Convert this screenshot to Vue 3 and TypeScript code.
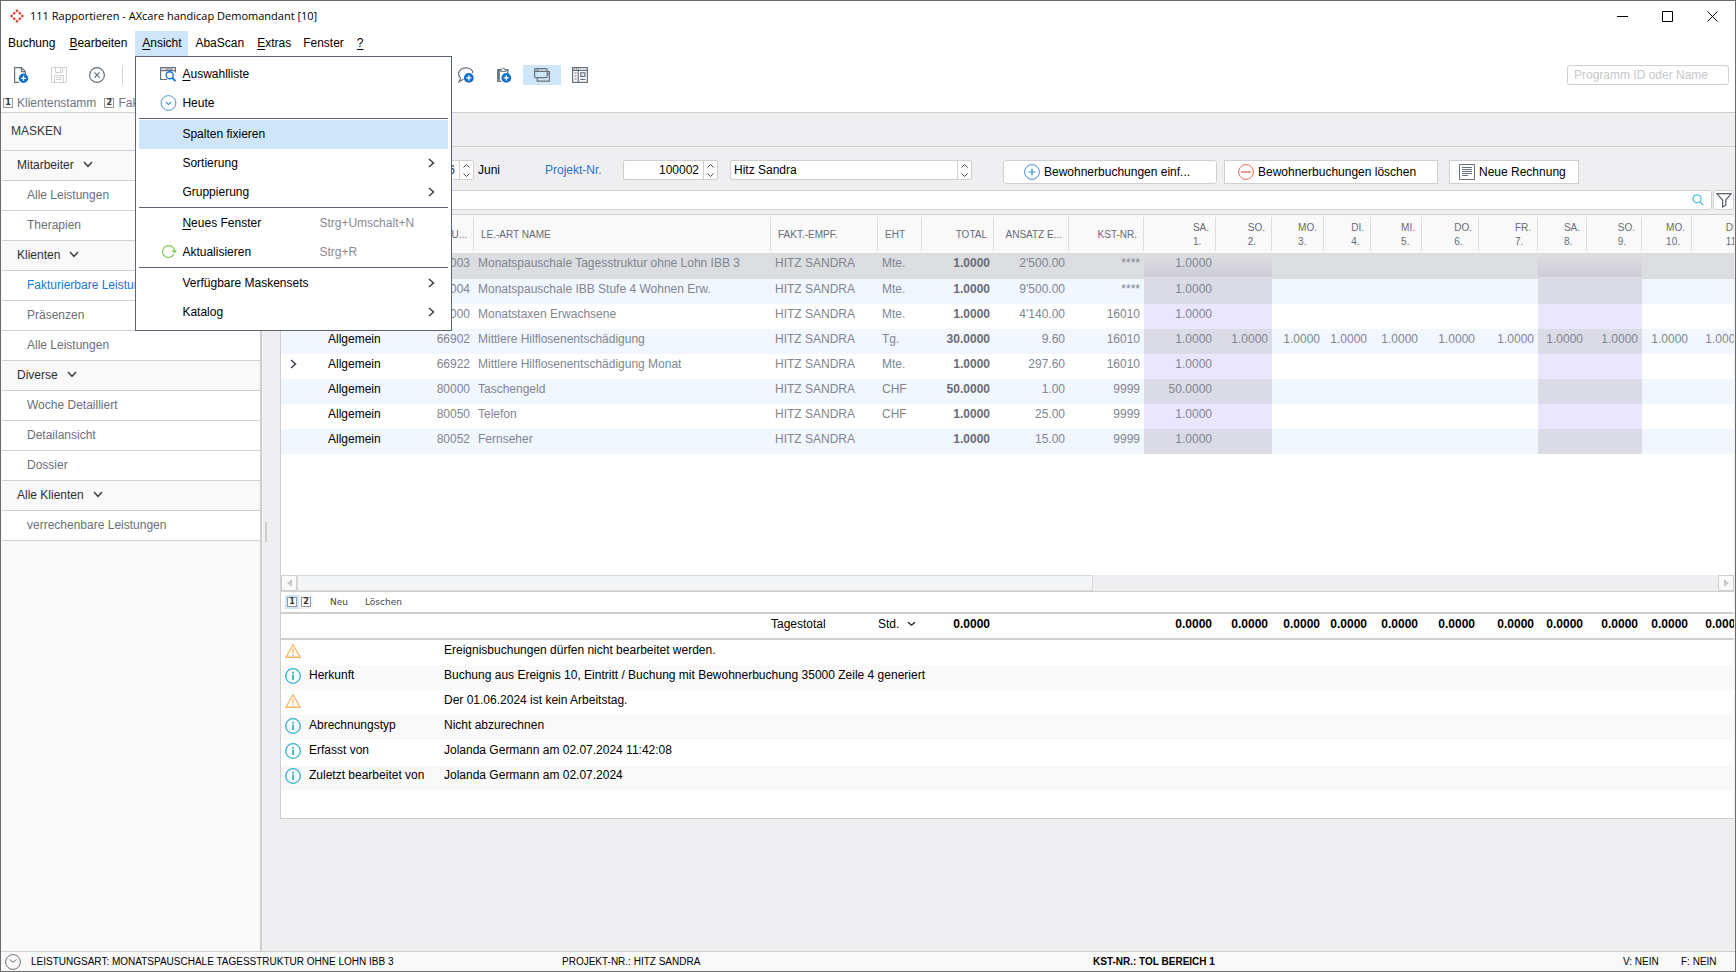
<script setup lang="ts">
import { ref } from 'vue'

interface MaskGroup { title: string; items: string[] }
interface Booking {
  nr: string; name: string; unit: string; total: string; rate: string; kst: string
  days: string[]; expand?: boolean
}
interface Message { kind: 'warn' | 'info'; label: string; text: string }

const groups: MaskGroup[] = [
  { title: 'Mitarbeiter', items: ['Alle Leistungen', 'Therapien'] },
  { title: 'Klienten', items: ['Fakturierbare Leistungen', 'Präsenzen', 'Alle Leistungen'] },
  { title: 'Diverse', items: ['Woche Detailliert', 'Detailansicht', 'Dossier'] },
  { title: 'Alle Klienten', items: ['verrechenbare Leistungen'] },
]
const activeMask = 'Fakturierbare Leistungen'

const weekdays = ['SA.', 'SO.', 'MO.', 'DI.', 'MI.', 'DO.', 'FR.', 'SA.', 'SO.', 'MO.', 'DI.']
const isWeekend = (i: number) => weekdays[i] === 'SA.' || weekdays[i] === 'SO.'
const first = (v: string) => weekdays.map((_, i) => (i === 0 ? v : ''))

const bookings: Booking[] = [
  { nr: '35003', name: 'Monatspauschale Tagesstruktur ohne Lohn IBB 3', unit: 'Mte.', total: '1.0000', rate: "2'500.00", kst: '****', days: first('1.0000') },
  { nr: '35004', name: 'Monatspauschale IBB Stufe 4 Wohnen Erw.', unit: 'Mte.', total: '1.0000', rate: "9'500.00", kst: '****', days: first('1.0000') },
  { nr: '60000', name: 'Monatstaxen Erwachsene', unit: 'Mte.', total: '1.0000', rate: "4'140.00", kst: '16010', days: first('1.0000') },
  { nr: '66902', name: 'Mittlere Hilflosenentschädigung', unit: 'Tg.', total: '30.0000', rate: '9.60', kst: '16010', days: weekdays.map(() => '1.0000') },
  { nr: '66922', name: 'Mittlere Hilflosenentschädigung Monat', unit: 'Mte.', total: '1.0000', rate: '297.60', kst: '16010', days: first('1.0000'), expand: true },
  { nr: '80000', name: 'Taschengeld', unit: 'CHF', total: '50.0000', rate: '1.00', kst: '9999', days: first('50.0000') },
  { nr: '80050', name: 'Telefon', unit: 'CHF', total: '1.0000', rate: '25.00', kst: '9999', days: first('1.0000') },
  { nr: '80052', name: 'Fernseher', unit: '', total: '1.0000', rate: '15.00', kst: '9999', days: first('1.0000') },
]

const columnWidths = [36, 105, 52, 297, 107, 44, 72, 75, 75, 72, 56, 52, 47, 51, 57, 59, 49, 55, 50, 54]

const messages: Message[] = [
  { kind: 'warn', label: '', text: 'Ereignisbuchungen dürfen nicht bearbeitet werden.' },
  { kind: 'info', label: 'Herkunft', text: 'Buchung aus Ereignis 10, Eintritt / Buchung mit Bewohnerbuchung 35000 Zeile 4 generiert' },
  { kind: 'warn', label: '', text: 'Der 01.06.2024 ist kein Arbeitstag.' },
  { kind: 'info', label: 'Abrechnungstyp', text: 'Nicht abzurechnen' },
  { kind: 'info', label: 'Erfasst von', text: 'Jolanda Germann am 02.07.2024 11:42:08' },
  { kind: 'info', label: 'Zuletzt bearbeitet von', text: 'Jolanda Germann am 02.07.2024' },
]

const month = ref('6')
const project = ref('100002')
const client = ref('Hitz Sandra')
</script>

<template>
  <div class="window">
    <header class="titlebar">
      <svg class="logo" width="14" height="14" viewBox="0 0 14 14" fill="#e8453c">
        <path d="M7 0l1.7 1.7L7 3.4 5.3 1.7zM4.2 2.6l1.7 1.7-1.7 1.7-1.7-1.7zM9.8 2.6l1.7 1.7-1.7 1.7-1.7-1.7zM1.7 5.3L3.4 7 1.7 8.7 0 7zM12.3 5.3L14 7l-1.7 1.7L10.6 7zM4.2 8l1.7 1.7-1.7 1.7-1.7-1.7zM9.8 8l1.7 1.7-1.7 1.7L8.1 9.7zM7 10.6l1.7 1.7L7 14l-1.7-1.7z" />
      </svg>
      <h1>111 Rapportieren - AXcare handicap Demomandant [10]</h1>
      <div class="winbtns">
        <button type="button" aria-label="Minimieren"><svg width="11" height="11"><path d="M0 5.5h11" stroke="#000" /></svg></button>
        <button type="button" aria-label="Maximieren"><svg width="11" height="11"><path d="M.5.5h10v10H.5z" fill="none" stroke="#000" /></svg></button>
        <button type="button" aria-label="Schliessen"><svg width="11" height="11"><path d="M.5.5l10 10M10.5.5l-10 10" stroke="#000" /></svg></button>
      </div>
    </header>

    <nav class="menubar">
      <button type="button">Buchung</button>
      <button type="button"><u>B</u>earbeiten</button>
      <div class="open-menu">
        <button type="button" class="open"><u>A</u>nsicht</button>
        <div class="popup" role="menu">
          <button type="button" role="menuitem">
            <svg width="17" height="16" viewBox="0 0 17 16" fill="none">
              <path d="M7 13.5H.6V1.6h14.8v5M.6 4.6h14.8" stroke="#68727d" stroke-width="1.2" />
              <path d="M2.5 3.1h1M5 3.1h8" stroke="#68727d" />
              <circle cx="9.7" cy="9.2" r="3.5" stroke="#1677d2" stroke-width="1.4" />
              <path d="M12.2 11.8l3.3 3.3" stroke="#1677d2" stroke-width="2" />
            </svg>
            <span><u>A</u>uswahlliste</span>
          </button>
          <button type="button" role="menuitem">
            <svg width="16" height="16" viewBox="0 0 16 16" fill="none" stroke="#4a93d8">
              <circle cx="8" cy="8" r="7.4" /><path d="M5.5 7.2L8 9.4l2.5-2.2" stroke-width="1.2" />
            </svg>
            <span>Heute</span>
          </button>
          <hr />
          <button type="button" role="menuitem" class="hover"><i></i><span>Spalten fixieren</span></button>
          <button type="button" role="menuitem"><i></i><span>Sortierung</span><svg class="sub" width="7" height="10" viewBox="0 0 7 10"><path d="M1 1l4.5 4L1 9" /></svg></button>
          <button type="button" role="menuitem"><i></i><span>Gruppierung</span><svg class="sub" width="7" height="10" viewBox="0 0 7 10"><path d="M1 1l4.5 4L1 9" /></svg></button>
          <hr />
          <button type="button" role="menuitem"><i></i><span><u>N</u>eues Fenster</span><kbd>Strg+Umschalt+N</kbd></button>
          <button type="button" role="menuitem">
            <svg width="16" height="16" viewBox="0 0 16 16" fill="none" stroke="#7ecb4f" stroke-width="1.2">
              <path d="M13.3 10.4A6 6 0 1 1 14 8M11.8 6.4L14 8.6l1.8-2.2" />
            </svg>
            <span>Aktualisieren</span><kbd>Strg+R</kbd>
          </button>
          <hr />
          <button type="button" role="menuitem"><i></i><span>Verfügbare Maskensets</span><svg class="sub" width="7" height="10" viewBox="0 0 7 10"><path d="M1 1l4.5 4L1 9" /></svg></button>
          <button type="button" role="menuitem"><i></i><span>Katalog</span><svg class="sub" width="7" height="10" viewBox="0 0 7 10"><path d="M1 1l4.5 4L1 9" /></svg></button>
        </div>
      </div>
      <button type="button">AbaScan</button>
      <button type="button" class="tight"><u>E</u>xtras</button>
      <button type="button" class="tight">Fenster</button>
      <button type="button"><u>?</u></button>
    </nav>

    <div class="toolbar">
      <button type="button" class="tool" aria-label="Neu">
        <svg width="16" height="16" viewBox="0 0 16 16" fill="none">
          <path d="M6 15.4H1.6V.6h6.8l4 4V7M8.4.6v4h4" stroke="#68727d" stroke-width="1.2" />
          <circle cx="10.5" cy="11.3" r="4.7" fill="#1270cc" /><path d="M8 11.3h5M10.5 8.8v5" stroke="#fff" stroke-width="1.2" />
        </svg>
      </button>
      <button type="button" class="tool" aria-label="Speichern" disabled>
        <svg width="16" height="16" viewBox="0 0 16 16" fill="none" stroke="#d0d2d5">
          <path d="M.5.5h15v15H.5zM4.5.5v5h7v-5M9.5 1.5v2.5M3.5 15.5v-7h9v7M5 10.5h6M5 12.5h6" />
        </svg>
      </button>
      <button type="button" class="tool" aria-label="Abbrechen">
        <svg width="16" height="16" viewBox="0 0 16 16" fill="none" stroke="#5d6873" stroke-width="1.1">
          <circle cx="8" cy="8" r="7.4" /><path d="M5.4 5.4l5.2 5.2M10.6 5.4l-5.2 5.2" />
        </svg>
      </button>
      <span class="divider"></span>
      <span class="covered"></span>
      <button type="button" class="tool" aria-label="Kommentar hinzufügen">
        <svg width="16" height="16" viewBox="0 0 16 16" fill="none">
          <path d="M5.5 12.2L1 14.8l1.6-3.6C-1.8 6.8 1.8.8 8 .8c4 0 6.8 2.3 7 5.4" stroke="#68727d" stroke-width="1.2" />
          <circle cx="10.8" cy="10.9" r="4.9" fill="#1270cc" /><path d="M8.2 10.9h5.2M10.8 8.3v5.2" stroke="#fff" stroke-width="1.3" />
        </svg>
      </button>
      <button type="button" class="tool" aria-label="Aus Zwischenablage">
        <svg width="16" height="16" viewBox="0 0 16 16" fill="none">
          <path d="M5 14.3H1.8V2.7h10v3.5M3.2 2.7v10" stroke="#68727d" stroke-width="1.4" />
          <path d="M4.6 4.4V2.8h1.1a1.6 1.6 0 0 1 3.2 0H10v1.6z" stroke="#68727d" fill="#fff" />
          <circle cx="10.3" cy="10.9" r="4.9" fill="#1270cc" /><path d="M7.7 10.9h5.2M10.3 8.3v5.2" stroke="#fff" stroke-width="1.3" />
        </svg>
      </button>
      <button type="button" class="tool on" aria-label="Fenster gruppieren">
        <svg width="16" height="16" viewBox="0 0 16 16" fill="none" stroke="#68727d" stroke-width="1.2">
          <rect x=".6" y="1.6" width="12.6" height="9" rx="1" /><path d="M.6 4.4h12.6M2.5 3h2M13.2 4.6h2.2v9.6H3.2v-3.6M13.2 6.9h2.2" />
        </svg>
      </button>
      <button type="button" class="tool" aria-label="Maskenansicht">
        <svg width="16" height="16" viewBox="0 0 16 16" fill="none" stroke="#68727d" stroke-width="1.2">
          <path d="M.6.6h14.8v14.8H.6zM.6 3.4h14.8M6.2 3.4v12M8.8 5.8h4.2v3.6H8.8zM8.4 12.4h5M2.4 6h2.2M2.4 9h2.2M2.4 12h2.2M2 2h1M4 2h1M6 2h1" />
        </svg>
      </button>
      <input class="prog" type="text" placeholder="Programm ID oder Name" aria-label="Programm ID oder Name" />
    </div>

    <div class="crumbs">
      <a href="#"><b>1</b>Klientenstamm</a>
      <a href="#"><b>2</b>Fakturierung</a>
    </div>

    <div class="work">
      <aside class="sidebar">
        <h2>MASKEN</h2>
        <template v-for="g in groups" :key="g.title">
          <button type="button" class="group">
            {{ g.title }}
            <svg width="10" height="7" viewBox="0 0 10 7" fill="none" stroke="#3c4048" stroke-width="1.5"><path d="M1 1l4 4.3L9 1" /></svg>
          </button>
          <a v-for="item in g.items" :key="item" href="#" :class="{ active: item === activeMask }">{{ item }}</a>
        </template>
      </aside>
      <div class="splitter"><span></span></div>

      <main class="content">
        <div class="tabs"></div>
        <div class="form">
          <div class="field month">
            <input v-model="month" type="text" aria-label="Monat" />
            <span class="spin"><button type="button" aria-label="Monat vor"><svg width="7" height="4"><path d="M.5 3.5l3-3 3 3" /></svg></button><button type="button" aria-label="Monat zurück"><svg width="7" height="4"><path d="M.5.5l3 3 3-3" /></svg></button></span>
          </div>
          <span class="monthname">Juni</span>
          <label class="lbl" for="project">Projekt-Nr.</label>
          <div class="field nr">
            <input id="project" v-model="project" type="text" />
            <span class="spin"><button type="button" aria-label="Projekt vor"><svg width="7" height="4"><path d="M.5 3.5l3-3 3 3" /></svg></button><button type="button" aria-label="Projekt zurück"><svg width="7" height="4"><path d="M.5.5l3 3 3-3" /></svg></button></span>
          </div>
          <div class="field client">
            <input v-model="client" type="text" aria-label="Projektname" />
            <span class="spin"><button type="button" aria-label="Name vor"><svg width="7" height="4"><path d="M.5 3.5l3-3 3 3" /></svg></button><button type="button" aria-label="Name zurück"><svg width="7" height="4"><path d="M.5.5l3 3 3-3" /></svg></button></span>
          </div>
          <div class="actions">
            <button type="button" class="round">
              <svg width="16" height="16" viewBox="0 0 16 16" fill="none" stroke="#3d8fdb"><circle cx="8" cy="8" r="7.4" /><path d="M4.6 8h6.8M8 4.6v6.8" stroke-width="1.2" /></svg>
              Bewohnerbuchungen einf...
            </button>
            <button type="button">
              <svg width="16" height="16" viewBox="0 0 16 16" fill="none" stroke="#f0625c"><circle cx="8" cy="8" r="7.4" /><path d="M3 8h10" stroke-width="1.3" /></svg>
              Bewohnerbuchungen löschen
            </button>
            <button type="button" class="slim">
              <svg width="16" height="16" viewBox="0 0 16 16" fill="none" stroke="#68727d"><path d="M.5.5h15v15H.5zM3 3.5h10M3 5.5h10M3 7.5h10M3 9.5h10M3 11.5h6" /></svg>
              Neue Rechnung
            </button>
          </div>
        </div>

        <div class="filter">
          <div class="search">
            <input type="search" aria-label="Tabelle durchsuchen" />
            <svg width="12" height="12" viewBox="0 0 12 12" fill="none" stroke="#4cc3d9" stroke-width="1.3"><circle cx="5" cy="4.8" r="4" /><path d="M7.8 7.8l3.4 3.5" /></svg>
          </div>
          <button type="button" class="funnel" aria-label="Filter">
            <svg width="16" height="16" viewBox="0 0 16 16" fill="none" stroke="#55606b" stroke-width="1.2"><path d="M.8 1.6h14.4L9.8 8v5l-3.2 2V8z" /></svg>
          </button>
        </div>

        <section class="panel">
          <div class="grid">
            <table>
              <colgroup><col v-for="(w, i) in columnWidths" :key="i" :width="w" /></colgroup>
              <thead>
                <tr>
                  <th class="bare"></th><th class="bare"></th>
                  <th class="num">NU...</th>
                  <th>LE.-ART NAME</th><th>FAKT.-EMPF.</th><th>EHT</th>
                  <th class="num">TOTAL</th><th class="num">ANSATZ E...</th><th class="num">KST-NR.</th>
                  <th v-for="(d, i) in weekdays" :key="i" class="num"><span>{{ d }}<br />{{ i + 1 }}.</span></th>
                </tr>
              </thead>
              <tbody>
                <tr v-for="(b, r) in bookings" :key="b.nr" :class="{ selected: r === 0 }">
                  <td class="mark"><svg v-if="b.expand" width="7" height="10" viewBox="0 0 7 10"><path d="M1 1l4.5 4L1 9" /></svg></td>
                  <td class="area">Allgemein</td>
                  <td class="num">{{ b.nr }}</td>
                  <td>{{ b.name }}</td>
                  <td>HITZ SANDRA</td>
                  <td>{{ b.unit }}</td>
                  <td class="num total">{{ b.total }}</td>
                  <td class="num">{{ b.rate }}</td>
                  <td class="num">{{ b.kst }}</td>
                  <td v-for="(v, i) in b.days" :key="i" class="num" :class="{ weekend: isWeekend(i) }">{{ v }}</td>
                </tr>
              </tbody>
            </table>
          </div>
          <div class="hscroll">
            <button type="button" aria-label="Nach links"><svg width="5" height="8"><path d="M5 0v8L0 4z" fill="#c6c7ca" /></svg></button>
            <div class="track"><div class="thumb"></div></div>
            <button type="button" aria-label="Nach rechts"><svg width="5" height="8"><path d="M0 0v8l5-4z" fill="#c6c7ca" /></svg></button>
          </div>
          <div class="rowtools">
            <button type="button" class="key on"><b>1</b></button>
            <button type="button" class="key"><b>2</b></button>
            <button type="button" class="first">Neu</button>
            <button type="button">Löschen</button>
          </div>
          <div class="totals">
            <table>
              <colgroup><col v-for="(w, i) in columnWidths" :key="i" :width="w" /></colgroup>
              <tbody>
                <tr>
                  <td colspan="4"></td>
                  <td class="flush">Tagestotal</td>
                  <td class="flush">
                    <div class="unit">
                      <select aria-label="Einheit"><option>Std.</option></select>
                      <svg width="9" height="6" viewBox="0 0 9 6" fill="none" stroke="#222" stroke-width="1.4"><path d="M1 1.2l3.5 3L8 1.2" /></svg>
                    </div>
                  </td>
                  <td class="num">0.0000</td><td></td><td></td>
                  <td v-for="(d, i) in weekdays" :key="i" class="num">0.0000</td>
                </tr>
              </tbody>
            </table>
          </div>
          <dl class="messages">
            <div v-for="m in messages" :key="m.text">
              <svg v-if="m.kind === 'warn'" width="16" height="16" viewBox="0 0 16 16" fill="none" stroke="#f9b565" stroke-width="1.2">
                <path d="M8 1.6l7.2 12.8H.8zM1 14.2h14" /><path d="M8 5.6v5M8 11.4v1.6" stroke-width="1.8" stroke="#fbcb92" />
              </svg>
              <svg v-else width="16" height="16" viewBox="0 0 16 16" fill="none" stroke="#2fb3cb" stroke-width="1.3">
                <circle cx="8" cy="8" r="7.3" /><path d="M8 6.4v5.6M8 3.8v1.6" stroke-width="1.8" />
              </svg>
              <dt>{{ m.label }}</dt>
              <dd>{{ m.text }}</dd>
            </div>
          </dl>
        </section>
      </main>
    </div>

    <footer class="status">
      <svg width="16" height="16" viewBox="0 0 16 16" fill="none" stroke="#68727d"><circle cx="8" cy="8" r="7.4" /><path d="M4.6 5.6L8 8.2l3.4-2.6" /></svg>
      <span>LEISTUNGSART: MONATSPAUSCHALE TAGESSTRUKTUR OHNE LOHN IBB 3</span>
      <span>PROJEKT-NR.: HITZ SANDRA</span>
      <strong>KST-NR.: TOL BEREICH 1</strong>
      <span>V: NEIN</span>
      <span>F: NEIN</span>
    </footer>
  </div>
</template>

<style>
html, body { margin: 0; background: #fff; }
</style>

<style scoped>
* { box-sizing: border-box; }
.window {
  display: flex; flex-direction: column; min-height: 100vh; overflow: hidden;
  border: 1px solid #6b6b6b; background: #fff; color: #000;
  font: 12px/16px "Liberation Sans", Arial, sans-serif;
}
button, input, select { font: inherit; color: inherit; margin: 0; padding: 0; border: 0; background: none; border-radius: 0; outline: 0; }
button { display: flex; align-items: center; white-space: nowrap; }
svg { flex: none; display: block; }
u { text-underline-offset: 2px; }

.titlebar { display: flex; align-items: center; height: 30px; padding-left: 9px; }
h1 { flex: 1; margin: 0 0 0 6px; font: 11px/16px "Open Sans", "Noto Sans", sans-serif; }
.winbtns { display: flex; }
.winbtns button { width: 45px; height: 28px; justify-content: center; }

.menubar { display: flex; height: 25px; }
.menubar > button { padding: 0 7px 2px; }
.menubar > .tight { padding: 0 6px 2px; }
.open-menu { position: relative; display: flex; margin-left: 1px; }
.open { background: #cfe6fa; width: 53px; padding-bottom: 2px; justify-content: center; }
.popup {
  position: absolute; z-index: 5; top: 25px; left: 0; width: 317px; padding: 3px;
  border: 1px solid #5b6472; background: #fff;
}
.popup button { width: 100%; height: 29px; padding: 0 13px 1px 21px; }
.popup button > svg:first-child, .popup i { width: 17px; margin-right: 5px; }
.popup .hover { background: #cfe6fa; }
.popup hr { height: 1px; margin: 0 0 1px; border: 0; background: #5b6472; }
.popup kbd { margin-left: auto; width: 116px; text-align: left; font: inherit; color: #858a94; }
.popup .sub { margin-left: auto; }
.sub, .mark svg { fill: none; stroke: #3c4048; stroke-width: 1.5; }

.toolbar { display: flex; align-items: center; height: 37px; padding: 0 6px 0 1px; }
.tool { width: 38px; height: 20px; justify-content: center; }
.tool.on { background: #cfe6fa; }
.divider { width: 1px; height: 20px; margin-left: 6px; background: #d3d4d7; }
.covered { width: 324px; }
.prog { width: 162px; height: 20px; margin-left: auto; padding: 0 6px; border: 1px solid #cfd0d2; border-radius: 3px; }
.prog::placeholder { color: #c6c8cc; opacity: 1; }

.crumbs { display: flex; gap: 8px; height: 19px; padding-left: 2px; color: #6f7480; }
.crumbs a { display: flex; align-items: center; color: inherit; text-decoration: none; }
.crumbs b { margin-right: 4px; }
b {
  display: block; width: 10px; height: 10px; border: 1px solid #999; background: #fff;
  font: bold 8px/8px "DejaVu Sans", sans-serif; color: #333; text-align: center;
}

.work { flex: 1; display: flex; border-top: 1px solid #cfcfd0; background: #efeff1; }
.sidebar { flex: none; width: 261px; padding-left: 1px; border-right: 2px solid #cfcfd0; background: #f9f9f9; }
h2 { height: 38px; margin: 0; padding: 0 9px; border-bottom: 1px solid #cfcfd0; font: 12px/37px "Liberation Sans", Arial, sans-serif; color: #33363d; }
.group, .sidebar a { display: flex; align-items: center; width: 100%; height: 30px; padding-bottom: 2px; border-bottom: 1px solid #cfcfd0; }
.group { gap: 9px; padding-left: 15px; color: #2c2e34; }
.sidebar a { padding-left: 25px; background: #fff; color: #6b6f7a; text-decoration: none; }
.sidebar a.active { color: #1677d2; }
.splitter { flex: none; display: flex; align-items: center; width: 18px; padding-left: 3px; }
.splitter span { width: 2px; height: 20px; background: #cfcfd0; }

.content { flex: 1; min-width: 0; }
.tabs { height: 34px; border-bottom: 1px solid #cfcfd0; }
.form { display: flex; align-items: flex-start; height: 43px; padding-top: 13px; }
.form > * { flex: none; }
.field { display: flex; height: 20px; border: 1px solid #cfcfd0; border-radius: 2px; background: #fff; }
.field input { flex: 1; min-width: 0; padding: 0 4px; text-align: right; }
.field.month { width: 63px; margin-left: 131px; }
.field.month input { color: #1c2f7a; }
.field.nr { width: 95px; }
.field.client { width: 242px; margin-left: 12px; }
.field.client input { padding: 0 3px; text-align: left; }
.spin { display: flex; flex-direction: column; width: 14px; border-left: 1px solid #cfcfd0; }
.spin button { flex: 1; justify-content: center; }
.spin path { fill: none; stroke: #444; }
.monthname, .lbl { line-height: 20px; }
.monthname { width: 71px; padding-left: 4px; }
.lbl { width: 78px; color: #2a72c8; }
.actions { display: flex; margin-left: 31px; }
.actions button { gap: 4px; width: 214px; height: 24px; margin-right: 7px; padding-left: 13px; border: 1px solid #cfcfd0; background: #fff; }
.actions .round { padding-left: 20px; border-radius: 3px; }
.actions .slim { width: 130px; margin-left: 4px; padding-left: 9px; }

.filter { display: flex; gap: 1px; height: 20px; margin-bottom: 4px; padding-right: 1px; }
.search { flex: 1; display: flex; align-items: center; padding-right: 7px; border: 1px solid #cfcfd0; border-radius: 3px; background: #fff; }
.search input { flex: 1; height: 18px; appearance: none; }
.funnel { width: 21px; justify-content: center; border: 1px solid #cfcfd0; border-radius: 3px; background: #fff; }

.panel { margin-right: 1px; border: 1px solid #cfcfd0; border-right: 0; background: #fff; }
.grid { min-height: 360px; overflow: hidden; }
table { width: 1465px; min-width: 100%; table-layout: fixed; border-collapse: separate; border-spacing: 0; }
th { height: 38px; padding: 2px 7px 0; background: linear-gradient(#dcdde0, #dcdde0) right 2px / 1px 34px no-repeat #f9f9f9; font: 10px/14px "Liberation Sans", Arial, sans-serif; color: #666b75; text-align: left; white-space: nowrap; }
th.bare { background: #f9f9f9; }
th.num span { display: inline-block; text-align: left; }
td { height: 25px; padding: 2px 4px 0; color: #808590; white-space: nowrap; vertical-align: top; }
.num { text-align: right; }
th.num { text-align: right; }
.area { padding-left: 11px; color: #000; }
.mark { padding: 5px 0 0 9px; }
td.total { font-weight: bold; color: #696c72; }
tbody tr:nth-child(even) td { background: #f2f6ff; }
td.weekend { background: #eae6ff; }
tbody tr:nth-child(even) td.weekend { background: #dbdae7; }
.selected td { height: 26px; background: #dcdde0; }
.selected td.weekend { background: linear-gradient(#dcdde0 10%, #cdccd8 90%, #dcdde0 92%); }

.hscroll { display: flex; height: 16px; }
.hscroll button { width: 16px; justify-content: center; border: 1px solid #cfcfd0; background: #f9f9f9; }
.track { flex: 1; background: #efeff1; }
.thumb { width: 56%; height: 16px; border: 1px solid #d9dadc; background: #f4f5f7; }
.rowtools { display: flex; align-items: center; height: 21px; padding-left: 4px; border-top: 1px solid #cfcfd0; font: 9px/12px "DejaVu Sans", Verdana, sans-serif; color: #444; }
.rowtools button { margin-right: 17px; }
.rowtools .key { width: 14px; height: 14px; margin-right: 0; justify-content: center; background: #f4f5f7; }
.rowtools .key.on { background: #cfe6fa; }
.rowtools .first { margin-left: 17px; }
.totals { overflow: hidden; border-top: 2px solid #cfcfd0; border-bottom: 2px solid #cfcfd0; }
.totals td { height: 24px; color: #000; }
.totals .num { font-weight: bold; }
.totals .flush { padding-left: 0; overflow: visible; }
.unit { display: flex; align-items: center; gap: 7px; }
.unit select { width: 22px; height: 16px; appearance: none; }
.messages { margin: 0; padding-bottom: 28px; }
.messages div { display: flex; align-items: center; height: 25px; padding: 0 4px; }
.messages div:nth-child(even) { background: #f9f9f9; }
.messages svg { margin-top: -3px; }
.messages dt { width: 135px; margin-left: 8px; padding-bottom: 5px; }
.messages dd { margin: 0; padding-bottom: 5px; }

.status { display: grid; grid-template-columns: 26px 531px 531px 1fr 58px 54px; align-items: center; height: 20px; padding-left: 4px; border-top: 1px solid #cfcfd0; background: #f9f9f9; font-size: 10px; }
</style>
